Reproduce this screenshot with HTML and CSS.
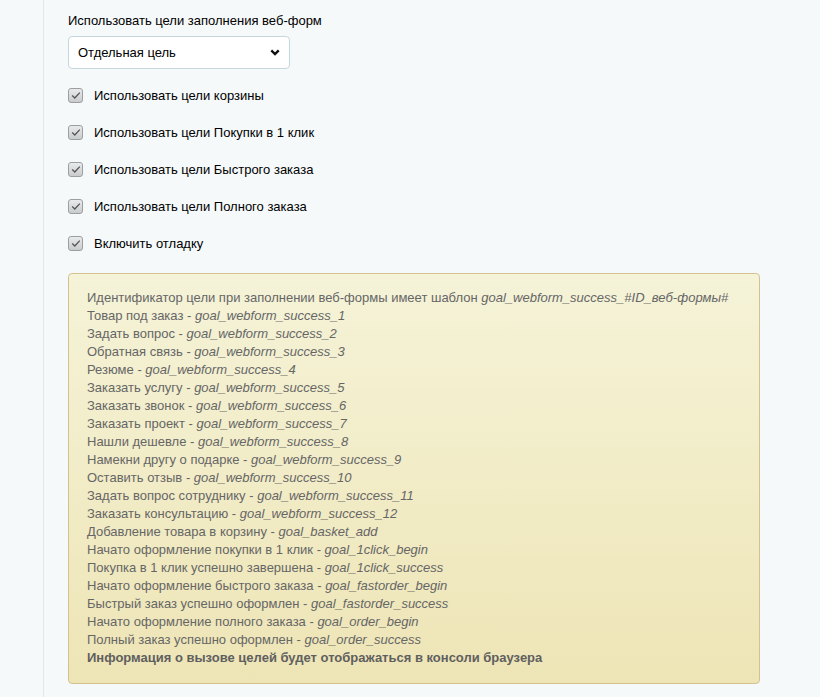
FILE: index.html
```html
<!DOCTYPE html>
<html>
	<head>
		<meta charset="utf-8">
		<title>Цели</title>
		<link rel="stylesheet" href="styles.css">
	</head>
	<body>
		<div class="page">
			<div class="settings">
				<div class="field">
					<label class="field-label">Использовать цели заполнения веб-форм</label>
					<div class="select">
						<span>Отдельная цель</span>
						<svg class="chevron" width="10" height="7" viewBox="0 0 10 7"><path d="M1.3 1.3 L5 5 L8.7 1.3" fill="none" stroke="#111" stroke-width="2.4"/></svg>
					</div>
				</div>

				<div class="check-list">
					<label class="check"><span class="box"><svg width="10" height="9" viewBox="0 0 10 9"><path d="M1.2 4.6 L3.8 7 L8.8 1.6" fill="none" stroke="#555" stroke-width="1.3"/></svg></span>Использовать цели корзины</label>
					<label class="check"><span class="box"><svg width="10" height="9" viewBox="0 0 10 9"><path d="M1.2 4.6 L3.8 7 L8.8 1.6" fill="none" stroke="#555" stroke-width="1.3"/></svg></span>Использовать цели Покупки в 1 клик</label>
					<label class="check"><span class="box"><svg width="10" height="9" viewBox="0 0 10 9"><path d="M1.2 4.6 L3.8 7 L8.8 1.6" fill="none" stroke="#555" stroke-width="1.3"/></svg></span>Использовать цели Быстрого заказа</label>
					<label class="check"><span class="box"><svg width="10" height="9" viewBox="0 0 10 9"><path d="M1.2 4.6 L3.8 7 L8.8 1.6" fill="none" stroke="#555" stroke-width="1.3"/></svg></span>Использовать цели Полного заказа</label>
					<label class="check"><span class="box"><svg width="10" height="9" viewBox="0 0 10 9"><path d="M1.2 4.6 L3.8 7 L8.8 1.6" fill="none" stroke="#555" stroke-width="1.3"/></svg></span>Включить отладку</label>
				</div>

				<div class="notes">
					Идентификатор цели при заполнении веб-формы имеет шаблон <i>goal_webform_success_#ID_веб-формы#</i><br>
					Товар под заказ - <i>goal_webform_success_1</i><br>
					Задать вопрос - <i>goal_webform_success_2</i><br>
					Обратная связь - <i>goal_webform_success_3</i><br>
					Резюме - <i>goal_webform_success_4</i><br>
					Заказать услугу - <i>goal_webform_success_5</i><br>
					Заказать звонок - <i>goal_webform_success_6</i><br>
					Заказать проект - <i>goal_webform_success_7</i><br>
					Нашли дешевле - <i>goal_webform_success_8</i><br>
					Намекни другу о подарке - <i>goal_webform_success_9</i><br>
					Оставить отзыв - <i>goal_webform_success_10</i><br>
					Задать вопрос сотруднику - <i>goal_webform_success_11</i><br>
					Заказать консультацию - <i>goal_webform_success_12</i><br>
					Добавление товара в корзину - <i>goal_basket_add</i><br>
					Начато оформление покупки в 1 клик - <i>goal_1click_begin</i><br>
					Покупка в 1 клик успешно завершена - <i>goal_1click_success</i><br>
					Начато оформление быстрого заказа - <i>goal_fastorder_begin</i><br>
					Быстрый заказ успешно оформлен - <i>goal_fastorder_success</i><br>
					Начато оформление полного заказа - <i>goal_order_begin</i><br>
					Полный заказ успешно оформлен - <i>goal_order_success</i><br>
					<b>Информация о вызове целей будет отображаться в консоли браузера</b>
				</div>
			</div>
		</div>
	</body>
</html>
```

FILE: styles.css
```css
* {
	margin: 0;
	padding: 0;
	box-sizing: border-box;
}

body {
	background: #f5f9fa;
	font-family: 'Liberation Sans', Arial, sans-serif;
	font-size: 13px;
	color: #000;
}

.page {
	margin-left: 43px;
	border-left: 1px solid #dfe8ec;
	min-height: 697px;
	padding: 13px 0 0 24px;
}

.settings {
	width: 692px;
}

.field-label {
	display: block;
	line-height: 16px;
	margin-bottom: 7px;
}

.select {
	width: 222px;
	height: 33px;
	background: #fff;
	border: 1px solid #c6d6de;
	border-radius: 4px;
	display: flex;
	align-items: center;
	justify-content: space-between;
	padding: 0 9px 0 9px;
}

.check-list {
	display: flex;
	flex-direction: column;
	padding-top: 8px;
}

.check {
	display: flex;
	align-items: center;
	height: 37px;
	gap: 11px;
}

.box {
	width: 15px;
	height: 15px;
	border: 1px solid #9c9fa2;
	border-radius: 3px;
	background: linear-gradient(#e9eaeb, #c9cbcd);
	display: flex;
	align-items: center;
	justify-content: center;
}

.notes {
	margin-top: 11px;
	border: 1px solid #d3c290;
	border-radius: 4px;
	background: linear-gradient(#f5f3d8, #eee5b6);
	padding: 15px 18px 16px;
	line-height: 18px;
	color: #666;
}

.notes b {
	color: #5f5f5f;
}
```
